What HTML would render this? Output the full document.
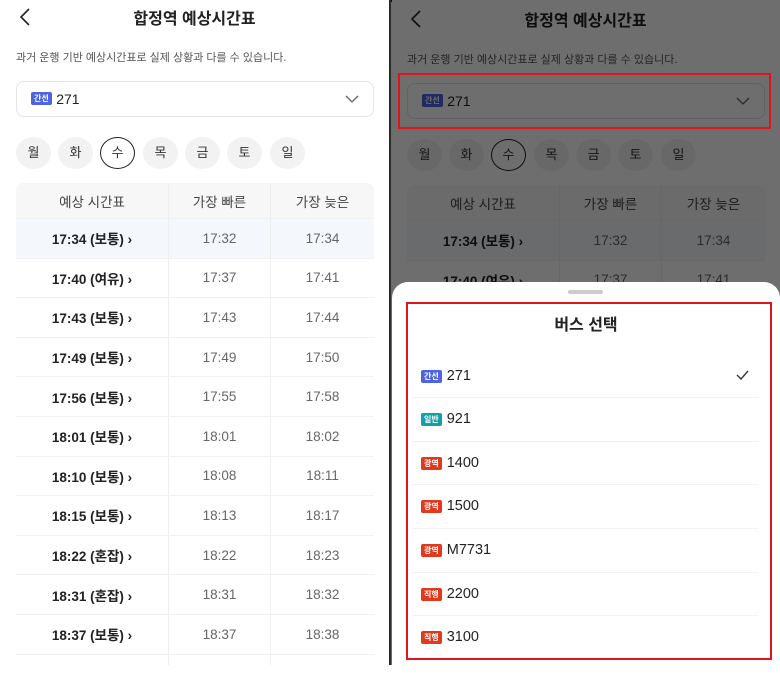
<!DOCTYPE html>
<html><head><meta charset="utf-8"><style>
*{margin:0;padding:0;box-sizing:border-box}
body{width:780px;height:665px;overflow:hidden;background:#fff;font-family:"Liberation Sans","Noto Sans CJK KR",sans-serif;color:#222;position:relative}
.scr{position:absolute;top:0;width:389px;height:665px;background:#fff;overflow:hidden}
.ab{position:absolute}
.title{left:0;width:389px;top:5px;text-align:center;font-size:16px;font-weight:700}
.note{left:16px;top:49px;font-size:11px;color:#555}
.dd{left:16px;top:81px;width:358px;height:36px;border:1px solid #e4e4e4;border-radius:8px}
.badge{display:inline-block;font-size:8px;color:#fff;border-radius:2px;padding:0 3px;height:13px;line-height:13px;font-weight:700;vertical-align:middle}
.bl{background:#4d63e0}.tl{background:#14a0a8}.rd{background:#e0391e}
.day{top:137px;width:35px;height:32px;border-radius:50%;background:#f2f2f2;text-align:center;line-height:32px;font-size:13px;color:#333}
.day.on{background:#fff;border:1.3px solid #222;line-height:29px}
.tbl{left:16px;top:183px;width:358px;height:500px;border-radius:8px 8px 0 0;overflow:hidden}
.row{position:absolute;left:0;width:358px;height:39.6px;border-bottom:1px solid #f0f0f0;font-size:13.5px}
.row div{position:absolute;top:0;height:100%;display:flex;align-items:center;justify-content:center}
.c1{left:0;width:152px;font-weight:700;color:#222}
.c2{left:152px;width:103px;color:#666;border-left:1px solid #eee;border-right:1px solid #eee}
.c3{left:255px;width:103px;color:#666}
.hd{height:36px;background:#f7f7f7;top:0}
.hd div{font-weight:400;color:#444}
.ov{position:absolute;left:391px;top:0;width:389px;height:665px;background:rgba(0,0,0,.57)}
.sheet{position:absolute;left:392px;top:282px;width:388px;height:400px;background:#fff;border-radius:16px 16px 0 0}
.it{position:absolute;left:421px;font-size:14.5px;color:#222;height:20px;line-height:20px}
.it .badge{margin-right:5px;vertical-align:1px}
.sep{position:absolute;left:413px;width:346px;height:1px;background:#f2f2f2}
</style></head><body>
<div style="position:absolute;left:388px;top:0;width:4px;height:665px;background:#2a2a2a"></div>

<div class="scr" id="L" style="left:0">
<svg class="ab" style="left:18px;top:8px" width="14" height="18" viewBox="0 0 14 18"><path d="M11 1 L3 9 L11 17" fill="none" stroke="#222" stroke-width="1.6"/></svg>
<div class="ab title">합정역 예상시간표</div>
<div class="ab note">과거 운행 기반 예상시간표로 실제 상황과 다를 수 있습니다.</div>
<div class="ab dd"><span class="ab" style="left:14px;top:8px"><span class="badge bl">간선</span> <span style="font-size:14px;vertical-align:middle">271</span></span>
<svg class="ab" style="left:328px;top:13px" width="14" height="9" viewBox="0 0 14 9"><path d="M1 1 L7 7 L13 1" fill="none" stroke="#666" stroke-width="1.3"/></svg></div>
<div class="ab day" style="left:16px">월</div><div class="ab day" style="left:58px">화</div><div class="ab day on" style="left:100px">수</div><div class="ab day" style="left:143px">목</div><div class="ab day" style="left:185px">금</div><div class="ab day" style="left:227px">토</div><div class="ab day" style="left:270px">일</div>
<div class="ab tbl">
<div class="row hd"><div class="c1">예상 시간표</div><div class="c2">가장 빠른</div><div class="c3">가장 늦은</div></div>
<div class="row" style="top:36px;background:#f4f7fc"><div class="c1">17:34 (보통) ›</div><div class="c2">17:32</div><div class="c3">17:34</div></div>
<div class="row" style="top:75.6px"><div class="c1">17:40 (여유) ›</div><div class="c2">17:37</div><div class="c3">17:41</div></div>
<div class="row" style="top:115.2px"><div class="c1">17:43 (보통) ›</div><div class="c2">17:43</div><div class="c3">17:44</div></div>
<div class="row" style="top:154.8px"><div class="c1">17:49 (보통) ›</div><div class="c2">17:49</div><div class="c3">17:50</div></div>
<div class="row" style="top:194.4px"><div class="c1">17:56 (보통) ›</div><div class="c2">17:55</div><div class="c3">17:58</div></div>
<div class="row" style="top:234px"><div class="c1">18:01 (보통) ›</div><div class="c2">18:01</div><div class="c3">18:02</div></div>
<div class="row" style="top:273.6px"><div class="c1">18:10 (보통) ›</div><div class="c2">18:08</div><div class="c3">18:11</div></div>
<div class="row" style="top:313.2px"><div class="c1">18:15 (보통) ›</div><div class="c2">18:13</div><div class="c3">18:17</div></div>
<div class="row" style="top:352.8px"><div class="c1">18:22 (혼잡) ›</div><div class="c2">18:22</div><div class="c3">18:23</div></div>
<div class="row" style="top:392.4px"><div class="c1">18:31 (혼잡) ›</div><div class="c2">18:31</div><div class="c3">18:32</div></div>
<div class="row" style="top:432px"><div class="c1">18:37 (보통) ›</div><div class="c2">18:37</div><div class="c3">18:38</div></div>
<div class="row" style="top:471.6px"><div class="c1"></div><div class="c2"></div><div class="c3"></div></div>
</div>
</div>

<div class="scr" style="left:391px;top:2px">
<svg class="ab" style="left:18px;top:8px" width="14" height="18" viewBox="0 0 14 18"><path d="M11 1 L3 9 L11 17" fill="none" stroke="#222" stroke-width="1.6"/></svg>
<div class="ab title">합정역 예상시간표</div>
<div class="ab note">과거 운행 기반 예상시간표로 실제 상황과 다를 수 있습니다.</div>
<div class="ab dd"><span class="ab" style="left:14px;top:8px"><span class="badge bl">간선</span> <span style="font-size:14px;vertical-align:middle">271</span></span>
<svg class="ab" style="left:328px;top:13px" width="14" height="9" viewBox="0 0 14 9"><path d="M1 1 L7 7 L13 1" fill="none" stroke="#666" stroke-width="1.3"/></svg></div>
<div class="ab day" style="left:16px">월</div><div class="ab day" style="left:58px">화</div><div class="ab day on" style="left:100px">수</div><div class="ab day" style="left:143px">목</div><div class="ab day" style="left:185px">금</div><div class="ab day" style="left:227px">토</div><div class="ab day" style="left:270px">일</div>
<div class="ab tbl">
<div class="row hd"><div class="c1">예상 시간표</div><div class="c2">가장 빠른</div><div class="c3">가장 늦은</div></div>
<div class="row" style="top:36px;background:#f4f7fc"><div class="c1">17:34 (보통) ›</div><div class="c2">17:32</div><div class="c3">17:34</div></div>
<div class="row" style="top:75.6px"><div class="c1">17:40 (여유) ›</div><div class="c2">17:37</div><div class="c3">17:41</div></div>
</div>
</div>
<div class="ov"></div>
<div class="ab" style="left:398px;top:73px;width:373px;height:56px;border:2.5px solid #e0141c"></div>

<div class="sheet"></div>
<div class="ab" style="left:568px;top:290px;width:35px;height:4px;border-radius:2px;background:#ccc"></div>
<div class="ab" style="left:406px;top:302px;width:366px;height:358px;border:2.5px solid #e0141c"></div>
<div class="ab" style="left:392px;top:311px;width:388px;text-align:center;font-size:16px;font-weight:700">버스 선택</div>
<div class="it" style="top:366px"><span class="badge bl">간선</span>271</div>
<svg class="ab" style="left:736px;top:370px" width="13" height="10" viewBox="0 0 13 10"><path d="M1 5 L5 9 L12 1" fill="none" stroke="#333" stroke-width="1.4"/></svg>
<div class="sep" style="top:397px"></div>
<div class="it" style="top:409px"><span class="badge tl">일반</span>921</div>
<div class="sep" style="top:441px"></div>
<div class="it" style="top:453px"><span class="badge rd">광역</span>1400</div>
<div class="sep" style="top:484px"></div>
<div class="it" style="top:496px"><span class="badge rd">광역</span>1500</div>
<div class="sep" style="top:528px"></div>
<div class="it" style="top:540px"><span class="badge rd">광역</span>M7731</div>
<div class="sep" style="top:572px"></div>
<div class="it" style="top:584px"><span class="badge rd">직행</span>2200</div>
<div class="sep" style="top:615px"></div>
<div class="it" style="top:627px"><span class="badge rd">직행</span>3100</div>
</body></html>
